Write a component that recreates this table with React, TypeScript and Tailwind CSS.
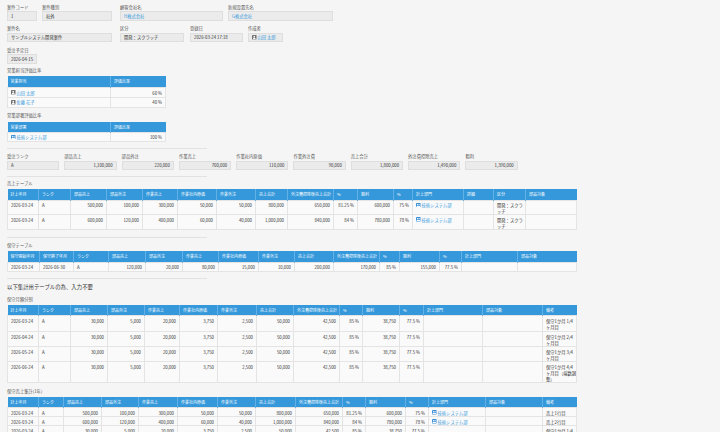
import React from "react";

type Col = { h: string; w: string; r?: boolean };

function UserIcon() {
  return (
    <svg width="4.5" height="4.5" viewBox="0 0 10 10" className="shrink-0">
      <rect width="10" height="10" rx="1" fill="#6e6e6e" />
      <circle cx="5" cy="3.7" r="1.9" fill="#fff" />
      <path d="M1.8 9.2C2 6.6 3.5 5.9 5 5.9s3 .7 3.2 3.3z" fill="#fff" />
    </svg>
  );
}

function OrgIcon() {
  return (
    <svg width="4.5" height="4.5" viewBox="0 0 10 10" className="shrink-0">
      <rect width="10" height="10" rx="1" fill="#3b8fd6" />
      <circle cx="3.4" cy="3.6" r="1.4" fill="#fff" />
      <circle cx="6.8" cy="3.6" r="1.4" fill="#fff" />
      <path d="M1 8.8C1.2 6.6 2.2 5.9 3.4 5.9S5.6 6.6 5.8 8.8zM4.4 8.8C4.6 6.6 5.6 5.9 6.8 5.9S9 6.6 9.1 8.8z" fill="#fff" />
    </svg>
  );
}

function Link({ children, user }: { children: React.ReactNode; user?: boolean }) {
  return (
    <span className="flex items-center gap-[1px]">
      {user ? <UserIcon /> : null}
      <span className="text-[#3498db]">{children}</span>
    </span>
  );
}

function Org() {
  return (
    <span className="flex items-center gap-[1px]">
      <OrgIcon />
      <span className="text-[#3498db]">技術システム部</span>
    </span>
  );
}

function Label({ children }: { children: React.ReactNode }) {
  return <div className="h-[5px] leading-[5px] text-[4.3px] text-[#555] whitespace-nowrap">{children}</div>;
}

function Field({
  label,
  w,
  children,
  right,
}: {
  label: string;
  w: string;
  children?: React.ReactNode;
  right?: boolean;
}) {
  return (
    <div className="flex flex-col">
      <Label>{label}</Label>
      <div
        className={`${w} mt-[1.5px] h-[9.5px] bg-[#ebebeb] border border-[#dedede] px-[3px] flex items-center text-[4.3px] text-[#333] whitespace-nowrap ${
          right ? "justify-end" : ""
        }`}
      >
        {children}
      </div>
    </div>
  );
}

function Sep({ className }: { className: string }) {
  return <div className={`h-px w-[200px] bg-[#e2e2e2] ${className}`} />;
}

function Table({
  cols,
  rows,
  headH,
  rowH,
  w,
  mid,
}: {
  cols: Col[];
  rows: React.ReactNode[][];
  headH: string;
  rowH: string[];
  w: string;
  mid?: boolean;
}) {
  return (
    <table className={`table-fixed border-collapse ${w} text-[4.3px] leading-[6px]`}>
      <colgroup>
        {cols.map((c, i) => (
          <col key={i} className={c.w} />
        ))}
      </colgroup>
      <thead>
        <tr className={headH}>
          {cols.map((c, i) => (
            <th
              key={i}
              className="bg-[#3498db] text-white font-normal text-left px-[3px] border-l border-[#63b0e6] first:border-l-0 whitespace-nowrap overflow-hidden align-middle text-[4px]"
            >
              {c.h}
            </th>
          ))}
        </tr>
      </thead>
      <tbody>
        {rows.map((r, ri) => (
          <tr key={ri} className={rowH[ri]}>
            {r.map((cell, ci) => (
              <td
                key={ci}
                className={`bg-[#fafafa] border border-[#e4e4e4] px-[3px] text-[#333] whitespace-nowrap overflow-hidden ${
                  mid ? "align-middle" : "align-top pt-[1.5px]"
                } ${cols[ci].r ? "text-right" : ""}`}
              >
                {cell}
              </td>
            ))}
          </tr>
        ))}
      </tbody>
    </table>
  );
}

const uriageCols: Col[] = [
  { h: "計上年月", w: "w-[31px]" },
  { h: "ランク", w: "w-[32px]" },
  { h: "部品売上", w: "w-[36px]", r: true },
  { h: "部品外注", w: "w-[36px]", r: true },
  { h: "作業売上", w: "w-[35px]", r: true },
  { h: "作業社内原価", w: "w-[39px]", r: true },
  { h: "作業外注", w: "w-[39px]", r: true },
  { h: "売上合計", w: "w-[32px]", r: true },
  { h: "外注費控除後売上合計", w: "w-[46px]", r: true },
  { h: "%", w: "w-[24px]", r: true },
  { h: "粗利", w: "w-[36px]", r: true },
  { h: "%", w: "w-[19px]", r: true },
  { h: "計上部門", w: "w-[51px]" },
  { h: "詳細", w: "w-[30px]" },
  { h: "区分", w: "w-[32px]" },
  { h: "部品対象", w: "w-[51px]" },
];

const kubun = (
  <>
    開発：スクラ
    <br />
    ッチ
  </>
);

const uriageRows: React.ReactNode[][] = [
  ["2026-03-24", "A", "500,000", "100,000", "300,000", "50,000", "50,000", "800,000", "650,000", "81.25 %", "600,000", "75 %", <Org />, "", kubun, ""],
  ["2026-03-24", "A", "600,000", "120,000", "400,000", "60,000", "40,000", "1,000,000", "840,000", "84 %", "780,000", "78 %", <Org />, "", kubun, ""],
];

const hoshuCols: Col[] = [
  { h: "保守開始年月", w: "w-[32px]" },
  { h: "保守終了年月", w: "w-[34px]" },
  { h: "ランク", w: "w-[35px]" },
  { h: "部品売上", w: "w-[37px]", r: true },
  { h: "部品外注", w: "w-[37px]", r: true },
  { h: "作業売上", w: "w-[36px]", r: true },
  { h: "作業社内原価", w: "w-[40px]", r: true },
  { h: "作業外注", w: "w-[36px]", r: true },
  { h: "売上合計", w: "w-[39px]", r: true },
  { h: "外注費控除後売上合計", w: "w-[46px]", r: true },
  { h: "%", w: "w-[20px]", r: true },
  { h: "粗利", w: "w-[40px]", r: true },
  { h: "%", w: "w-[22px]", r: true },
  { h: "計上部門", w: "w-[56px]" },
  { h: "部品対象", w: "w-[59px]" },
];

const hoshuRows: React.ReactNode[][] = [
  ["2026-03-24", "2026-06-30", "A", "120,000", "20,000", "80,000", "15,000", "10,000", "200,000", "170,000", "85 %", "155,000", "77.5 %", "", ""],
];

const bunkatsuCols: Col[] = [
  { h: "計上年月", w: "w-[31px]" },
  { h: "ランク", w: "w-[32px]" },
  { h: "部品売上", w: "w-[37px]", r: true },
  { h: "部品外注", w: "w-[37px]", r: true },
  { h: "作業売上", w: "w-[35px]", r: true },
  { h: "作業社内原価", w: "w-[38px]", r: true },
  { h: "作業外注", w: "w-[39px]", r: true },
  { h: "売上合計", w: "w-[37px]", r: true },
  { h: "外注費控除後売上合計", w: "w-[46px]", r: true },
  { h: "%", w: "w-[23px]", r: true },
  { h: "粗利", w: "w-[37px]", r: true },
  { h: "%", w: "w-[24px]", r: true },
  { h: "計上部門", w: "w-[59px]" },
  { h: "部品対象", w: "w-[60px]" },
  { h: "備考", w: "w-[34px]" },
];

const bikou = (n: number, last?: boolean) =>
  last ? (
    <>
      保守1か月 {n}/4
      <br />
      ヶ月目（端数調
      <br />
      整）
    </>
  ) : (
    <>
      保守1か月 {n}/4
      <br />
      ヶ月目
    </>
  );

const bunkatsuRows: React.ReactNode[][] = ["03", "04", "05", "06"].map((m, i) => [
  `2026-${m}-24`,
  "A",
  "30,000",
  "5,000",
  "20,000",
  "3,750",
  "2,500",
  "50,000",
  "42,500",
  "85 %",
  "38,750",
  "77.5 %",
  "",
  "",
  bikou(i + 1, i === 3),
]);

const shukeiCols: Col[] = [
  { h: "計上年月", w: "w-[31px]" },
  { h: "ランク", w: "w-[25px]" },
  { h: "部品売上", w: "w-[38px]", r: true },
  { h: "部品外注", w: "w-[37px]", r: true },
  { h: "作業売上", w: "w-[39px]", r: true },
  { h: "作業社内原価", w: "w-[40px]", r: true },
  { h: "作業外注", w: "w-[38px]", r: true },
  { h: "売上合計", w: "w-[40px]", r: true },
  { h: "外注費控除後売上合計", w: "w-[47px]", r: true },
  { h: "%", w: "w-[23px]", r: true },
  { h: "粗利", w: "w-[40px]", r: true },
  { h: "%", w: "w-[23px]", r: true },
  { h: "計上部門", w: "w-[57px]" },
  { h: "部品対象", w: "w-[57px]" },
  { h: "備考", w: "w-[34px]" },
];

const shukeiRows: React.ReactNode[][] = [
  ["2026-03-24", "A", "500,000", "100,000", "300,000", "50,000", "50,000", "800,000", "650,000", "81.25 %", "600,000", "75 %", <Org />, "", "売上1行目"],
  ["2026-03-24", "A", "600,000", "120,000", "400,000", "60,000", "40,000", "1,000,000", "840,000", "84 %", "780,000", "78 %", <Org />, "", "売上2行目"],
  ["2026-03-24", "A", "30,000", "5,000", "20,000", "3,750", "2,500", "50,000", "42,500", "85 %", "38,750", "77.5 %", "", "", bikou(1)],
];

const amounts = [
  ["部品売上", "1,100,000"],
  ["部品外注", "220,000"],
  ["作業売上", "700,000"],
  ["作業社内原価", "110,000"],
  ["作業外注費", "90,000"],
  ["売上合計", "1,800,000"],
  ["外注費控除売上", "1,490,000"],
  ["粗利", "1,390,000"],
];

export default function App() {
  return (
    <div className="w-[720px] h-[432px] overflow-hidden bg-[#f5f5f5] pl-[7px] pt-[4.5px] font-['Noto_Sans_CJK_JP','Noto_Sans',sans-serif]">
      <div className="flex mb-[5.5px]">
        <div className="w-[35px]">
          <Field label="案件コード" w="w-[30px]">1</Field>
        </div>
        <div className="w-[78px]">
          <Field label="案件種別" w="w-[70px]">社外</Field>
        </div>
        <div className="w-[108px]">
          <Field label="顧客会社名" w="w-[103px]">
            <Link>H株式会社</Link>
          </Field>
        </div>
        <Field label="新規設置先名" w="w-[105px]">
          <Link>G株式会社</Link>
        </Field>
      </div>

      <div className="flex mb-[5.5px]">
        <div className="w-[113px]">
          <Field label="案件名" w="w-[105px]">サンプルシステム開発案件</Field>
        </div>
        <div className="w-[70px]">
          <Field label="区分" w="w-[64px]">開発：スクラッチ</Field>
        </div>
        <div className="w-[58px]">
          <Field label="登録日" w="w-[53px]">2026-03-24 17:18</Field>
        </div>
        <Field label="作成者" w="w-[35px]">
          <Link user>山田 太郎</Link>
        </Field>
      </div>

      <Field label="受注予定日" w="w-[30px]">2026-04-15</Field>

      <div className="mt-[4.5px]">
        <Label>営業担当評価比率</Label>
      </div>
      <div className="mt-[2.5px]">
        <Table
          w="w-[158px]"
          mid
          cols={[
            { h: "営業担当", w: "w-[103px]" },
            { h: "評価比率", w: "w-[55px]", r: true },
          ]}
          rows={[
            [<Link user>山田 太郎</Link>, "60 %"],
            [<Link user>佐藤 花子</Link>, "40 %"],
          ]}
          headH="h-[12px]"
          rowH={["h-[10px]", "h-[9.5px]"]}
        />
      </div>

      <div className="mt-[5.5px]">
        <Label>営業部署評価比率</Label>
      </div>
      <div className="mt-[3.5px]">
        <Table
          w="w-[158px]"
          mid
          cols={[
            { h: "営業部署", w: "w-[103px]" },
            { h: "評価比率", w: "w-[55px]", r: true },
          ]}
          rows={[[<Org />, "100 %"]]}
          headH="h-[11px]"
          rowH={["h-[9px]"]}
        />
      </div>

      <Sep className="mt-[6px]" />

      <div className="flex gap-[5px] mt-[5px]">
        <Field label="受注ランク" w="w-[52.3px]">A</Field>
        {amounts.map(([l, v]) => (
          <Field key={l} label={l} w="w-[52.3px]" right>
            {v}
          </Field>
        ))}
      </div>

      <Sep className="mt-[6px]" />

      <div className="mt-[3.5px]">
        <Label>売上テーブル</Label>
      </div>
      <div className="mt-[3.5px]">
        <Table w="w-[569px]" cols={uriageCols} rows={uriageRows} headH="h-[11px]" rowH={["h-[14px]", "h-[13.5px]"]} />
      </div>

      <Sep className="mt-[7.5px]" />

      <div className="mt-[4.5px]">
        <Label>保守テーブル</Label>
      </div>
      <div className="mt-[3.5px]">
        <Table w="w-[569px]" cols={hoshuCols} rows={hoshuRows} headH="h-[11px]" rowH={["h-[9.5px]"]} />
      </div>

      <Sep className="mt-[5.5px]" />

      <div className="mt-[5px] h-[7px] leading-[7px] text-[5.4px] text-[#333] whitespace-nowrap">
        以下集計用テーブルの為、入力不要
      </div>

      <div className="mt-[6.5px]">
        <Label>保守月額分割</Label>
      </div>
      <div className="mt-[2.5px]">
        <Table
          w="w-[569px]"
          cols={bunkatsuCols}
          rows={bunkatsuRows}
          headH="h-[11px]"
          rowH={["h-[16px]", "h-[15px]", "h-[15px]", "h-[21px]"]}
        />
      </div>

      <div className="mt-[6px]">
        <Label>保守売上集計(1年)</Label>
      </div>
      <div className="mt-[2.5px]">
        <Table
          w="w-[569px]"
          cols={shukeiCols}
          rows={shukeiRows}
          headH="h-[11px]"
          rowH={["h-[9px]", "h-[9px]", "h-[15px]"]}
        />
      </div>
    </div>
  );
}
